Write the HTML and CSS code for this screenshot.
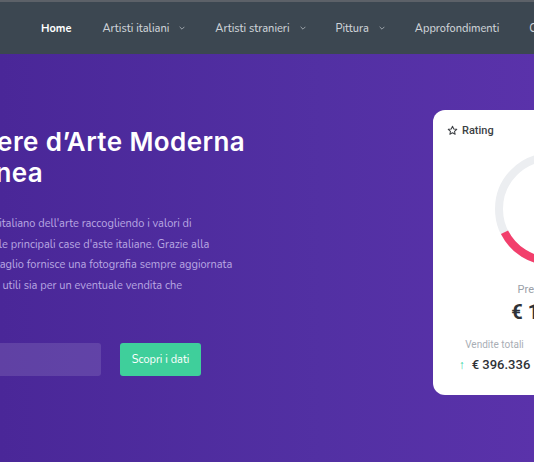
FILE: index.html
```html
<!DOCTYPE html>
<html lang="it">
<head>
<meta charset="utf-8">
<title>Quotazioni Opere d'Arte</title>
<link rel="stylesheet" href="styles.css">
</head>
<body>
<header class="topbar">
  <nav class="nav">
    <a class="nav-link active" href="#">Home</a>
    <a class="nav-link" href="#">Artisti italiani <svg class="chev" viewBox="0 0 10 6"><path d="M1 1l4 4 4-4"/></svg></a>
    <a class="nav-link" href="#">Artisti stranieri <svg class="chev" viewBox="0 0 10 6"><path d="M1 1l4 4 4-4"/></svg></a>
    <a class="nav-link" href="#">Pittura <svg class="chev" viewBox="0 0 10 6"><path d="M1 1l4 4 4-4"/></svg></a>
    <a class="nav-link" href="#">Approfondimenti</a>
    <a class="nav-link" href="#">Contatti</a>
  </nav>
</header>
<section class="hero">
  <div class="hero-inner">
    <div class="hero-text">
      <h1 class="title">Quotazioni Opere d’Arte Moderna<br>e Contemporanea</h1>
      <p class="lead">Questo portale osserva il mercato italiano dell'arte raccogliendo i valori di<br>aggiudicazione nelle varie aste delle principali case d'aste italiane. Grazie alla<br>sua banca dati, ogni scheda di dettaglio fornisce una fotografia sempre aggiornata<br>sulle quotazioni attuali e sui valori, utili sia per un eventuale vendita che<br>per un acquisto.</p>
      <form class="search">
        <input class="search-input" type="text" placeholder="Cerca un artista">
        <button class="search-btn" type="button">Scopri i dati</button>
      </form>
    </div>
    <aside class="card">
      <div class="card-head"><svg class="star" viewBox="0 0 24 24"><path d="M12 2.8l2.8 6 6.5.7-4.9 4.4 1.4 6.4L12 17l-5.8 3.3 1.4-6.4-4.9-4.4 6.5-.7z"/></svg>Rating</div>
      <div class="ring-wrap">
        <svg class="ring" viewBox="0 0 120 120">
          <circle class="ring-bg" cx="60" cy="60" r="52"/>
          <circle class="ring-fg" cx="60" cy="60" r="52" pathLength="100" stroke-dasharray="67.6 100" transform="rotate(-90 60 60)"/>
        </svg>
        <span class="ring-value">6.8</span>
      </div>
      <div class="price">
        <span class="price-label">Prezzo medio</span>
        <span class="price-value">€ 12.480</span>
      </div>
      <div class="stats">
        <div class="stat">
          <span class="stat-label">Vendite totali</span>
          <span class="stat-value"><span class="up">↑</span>€ 396.336</span>
        </div>
        <div class="stat">
          <span class="stat-label">Opere vendute</span>
          <span class="stat-value"><span class="up">↑</span>32</span>
        </div>
      </div>
    </aside>
  </div>
</section>
</body>
</html>
```

FILE: styles.css
```css
* { box-sizing: border-box; }
html, body { margin: 0; padding: 0; }
body {
  width: 534px;
  height: 462px;
  overflow: hidden;
  font-family: "Nunito", "Lato", "Noto Sans", sans-serif;
  background: #4c2a9b;
}
.topbar {
  height: 54px;
  background: #3c4751;
  border-top: 2px solid #5c6168;
  display: flex;
  align-items: center;
  overflow: hidden;
}
.nav {
  display: flex;
  align-items: center;
  gap: 30px;
  padding-left: 41px;
  white-space: nowrap;
}
.nav-link {
  color: #cdd2d7;
  text-decoration: none;
  font-size: 11px;
  font-weight: 500;
  display: flex;
  align-items: center;
  gap: 10px;
}
.nav-link.active { color: #ffffff; font-weight: 700; margin-right: 1px; }
.chev {
  width: 6px;
  height: 4px;
  fill: none;
  stroke: #aeb4ba;
  stroke-width: 1.4;
}
.hero {
  height: 408px;
  background: linear-gradient(90deg, #4a2798 0%, #5230a3 60%, #5a32aa 100%);
  overflow: hidden;
}
.hero-inner {
  display: flex;
  align-items: flex-start;
  gap: 43px;
  margin-left: -170px;
  padding-top: 56px;
}
.hero-text {
  flex: 0 0 560px;
  padding-top: 16px;
}
.title {
  margin: 0 0 0 -17px;
  color: #ffffff;
  font-family: "Inter", "Lato", sans-serif;
  font-weight: 600;
  font-size: 26px;
  line-height: 31px;
  letter-spacing: 0.4px;
}
.lead {
  margin: 26px 0 0;
  color: #b9a8e2;
  font-size: 11px;
  line-height: 20.5px;
}
.search {
  display: flex;
  gap: 19px;
  margin-top: 26px;
}
.search-input {
  width: 271px;
  height: 33px;
  border: 0;
  border-radius: 3px;
  background: rgba(255, 255, 255, 0.12);
  padding: 0 14px;
  font: inherit;
  font-size: 11px;
  color: #fff;
}
.search-input::placeholder { color: rgba(255,255,255,0.6); }
.search-btn {
  width: 81px;
  height: 33px;
  padding: 0;
  border: 0;
  border-radius: 3px;
  background: #3fcf9b;
  color: #ffffff;
  font: inherit;
  font-size: 11px;
}
.card {
  flex: 0 0 236px;
  height: 285px;
  background: #ffffff;
  border-radius: 12px;
  padding: 14px 14px 0;
  display: flex;
  flex-direction: column;
  align-items: center;
  font-family: "Roboto", "Noto Sans", sans-serif;
}
.card-head {
  align-self: flex-start;
  display: flex;
  align-items: center;
  gap: 4px;
  font-size: 11px;
  font-weight: 500;
  color: #3c3f44;
}
.star {
  width: 11px;
  height: 11px;
  fill: none;
  stroke: #3c3f44;
  stroke-width: 2.2;
  stroke-linejoin: round;
}
.ring-wrap {
  position: relative;
  width: 120px;
  height: 120px;
  margin-top: 12px;
}
.ring { width: 120px; height: 120px; display: block; }
.ring-bg { fill: none; stroke: #eceef1; stroke-width: 8; }
.ring-fg { fill: none; stroke: #f23f6c; stroke-width: 8; }
.ring-value {
  position: absolute;
  inset: 0;
  display: flex;
  align-items: center;
  justify-content: center;
  font-size: 22px;
  font-weight: 600;
  color: #3c3f44;
}
.price {
  display: flex;
  flex-direction: column;
  align-items: center;
  margin-top: 14px;
}
.price-label { font-size: 11px; color: #9aa0a8; }
.price-value { font-size: 20px; font-weight: 700; color: #2f3237; margin-top: 4px; }
.stats {
  align-self: stretch;
  display: grid;
  grid-template-columns: 1fr 1fr;
  margin: 15px -9px 0;
}
.stat {
  display: flex;
  flex-direction: column;
  align-items: center;
  gap: 7px;
}
.stat-label { font-size: 10px; color: #a9aeb5; }
.stat-value { font-size: 13px; font-weight: 500; color: #2f3237; display: flex; align-items: center; }
.up { color: #2fd3a0; margin-right: 7px; font-size: 12px; }
```
